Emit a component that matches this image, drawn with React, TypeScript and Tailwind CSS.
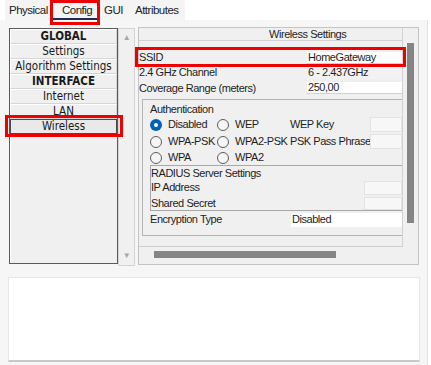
import React from "react";

const listItems: { label: string; bold?: boolean; selected?: boolean }[] = [
  { label: "GLOBAL", bold: true },
  { label: "Settings" },
  { label: "Algorithm Settings" },
  { label: "INTERFACE", bold: true },
  { label: "Internet" },
  { label: "LAN" },
  { label: "Wireless", selected: true },
];

function Radio({ checked = false }: { checked?: boolean }) {
  if (checked) {
    return (
      <span className="w-[12px] h-[12px] rounded-full bg-[#0061b9] flex items-center justify-center shrink-0">
        <span className="w-[4px] h-[4px] rounded-full bg-white" />
      </span>
    );
  }
  return <span className="w-[12px] h-[12px] rounded-full border border-[#5c5c5c] bg-[#f6f6f6] shrink-0" />;
}

function Option({ label, checked, w }: { label: string; checked?: boolean; w: string }) {
  return (
    <div className={`flex items-center gap-[6px] ${w} shrink-0 whitespace-nowrap`}>
      <Radio checked={checked} />
      <span>{label}</span>
    </div>
  );
}

function Field() {
  return <div className="w-[32px] h-[15px] bg-[#f7f7f7] border border-[#e3e3e3] shrink-0" />;
}

export default function App() {
  return (
    <div className="relative w-[431px] h-[365px] bg-white overflow-hidden font-['Liberation_Sans',Arial,sans-serif] text-[11px] tracking-[-0.45px] text-[#1e1e1e] leading-none">
      {/* tab strip */}
      <div className="flex h-[20px] text-[11.5px] tracking-[-0.5px] text-[#222] whitespace-nowrap">
        <div className="w-[5px]" />
        <div className="flex bg-[#f4f4f4] w-[180px]">
          <div className="w-[50px] pl-[4px] pt-[5px]">Physical</div>
          <div className="w-[45px] pl-[7px] pt-[5px] relative">
            Config
            <div className="absolute left-[-2px] right-[3px] bottom-0 h-[2px] bg-[#1e2d52]" />
          </div>
          <div className="w-[30px] pl-[4px] pt-[5px]">GUI</div>
          <div className="w-[55px] pl-[5px] pt-[5px]">Attributes</div>
        </div>
      </div>

      {/* body */}
      <div className="w-[428px] h-[345px] bg-[#f6f6f6] border-r border-[#e4e4e4] pt-[8px] pl-[9px]">
        <div className="flex h-[238px]">
          {/* left list */}
          <div className="w-[109px] h-[236px] border border-[#5a5a5a] bg-[#f0f0f0] flex flex-col font-['DejaVu_Sans_Condensed','DejaVu_Sans',sans-serif] text-[11.5px] tracking-normal text-[#1a1a1a]">
            {listItems.map((it) => (
              <div
                key={it.label}
                className={`h-[15px] shrink-0 flex items-center justify-center border ${
                  it.selected
                    ? "border-[#4a4a4a] bg-[#e9e9e9]"
                    : "border-t-white border-l-white border-b-[#d6d6d6] border-r-[#d6d6d6] bg-[#f0f0f0]"
                } ${it.bold ? "font-bold" : ""}`}
              >
                {it.label}
              </div>
            ))}
            <div className="flex-1 border-l border-t border-white" />
          </div>
          {/* left scrollbar */}
          <div className="w-[17px] h-[238px] border border-[#d4d4d4] bg-[#f0f0f0] flex flex-col items-center justify-between py-[5px] text-[#a6a6a6] text-[8px]">
            <span>▲</span>
            <span>▼</span>
          </div>

          {/* right panel */}
          <div className="ml-[3px] w-[281px] h-[238px] border border-[#c4c4c4] bg-[#f0f0f0] flex flex-col -mt-[1px]">
            <div className="flex h-[219px]">
              {/* viewport */}
              <div className="w-[263px] flex flex-col border-b border-[#cfcfcf]">
                <div className="h-[13px] border-b border-[#d2d2d2] pl-[130px] pt-[1px] whitespace-nowrap">Wireless Settings</div>
                <div className="mt-[9px] h-[15px] flex items-center">
                  <span className="w-[168px]">SSID</span>
                  <div className="w-[95px] h-[12px] bg-white border-b border-[#d0d0d0] pl-[1px] flex items-center">HomeGateway</div>
                </div>
                <div className="h-[15px] flex items-center">
                  <span className="w-[168px]">2.4 GHz Channel</span>
                  <div className="w-[95px] h-[12px] bg-[#f2f2f2] pl-[1px] flex items-center">6 - 2.437GHz</div>
                </div>
                <div className="h-[16px] flex items-center">
                  <span className="w-[168px] whitespace-nowrap">Coverage Range (meters)</span>
                  <div className="w-[95px] h-[12px] bg-white border-b border-[#d0d0d0] pl-[1px] flex items-center">250,00</div>
                </div>

                {/* authentication group */}
                <div className="mt-[3px] ml-[3px] w-[260px] h-[137px] border border-r-0 border-[#b4b4b4] pl-[7px] flex flex-col">
                  <div className="h-[16px] pt-[4px]">Authentication</div>
                  <div className="h-[17px] flex items-center">
                    <Option label="Disabled" checked w="w-[67px]" />
                    <Option label="WEP" w="w-[73px]" />
                    <span className="w-[80px] shrink-0">WEP Key</span>
                    <Field />
                  </div>
                  <div className="h-[17px] flex items-center">
                    <Option label="WPA-PSK" w="w-[67px]" />
                    <Option label="WPA2-PSK" w="w-[73px]" />
                    <span className="w-[80px] shrink-0 whitespace-nowrap">PSK Pass Phrase</span>
                    <Field />
                  </div>
                  <div className="h-[15px] flex items-center">
                    <Option label="WPA" w="w-[67px]" />
                    <Option label="WPA2" w="w-[73px]" />
                  </div>
                  <div className="h-[46px] border border-r-0 border-[#a8a8a8] flex flex-col">
                    <div className="h-[13px] pt-[2px] whitespace-nowrap">RADIUS Server Settings</div>
                    <div className="h-[17px] flex items-center justify-between">
                      <span>IP Address</span>
                      <div className="w-[38px] h-[14px] bg-[#f7f7f7] border border-[#e3e3e3]" />
                    </div>
                    <div className="h-[14px] flex items-center justify-between">
                      <span>Shared Secret</span>
                      <div className="w-[38px] h-[13px] bg-[#f7f7f7] border border-[#e3e3e3]" />
                    </div>
                  </div>
                  <div className="h-[17px] flex items-center">
                    <span className="w-[141px]">Encryption Type</span>
                    <div className="w-[111px] h-[14px] bg-white flex items-center pl-[1px]">Disabled</div>
                  </div>
                </div>
              </div>
              {/* vertical scrollbar */}
              <div className="w-[16px] border-l border-[#d2d2d2] pl-[4px] pt-[15px]">
                <div className="w-[7px] h-[180px] bg-[#858585]" />
              </div>
            </div>
            {/* horizontal scrollbar */}
            <div className="h-[17px] pl-[15px] pt-[4px]">
              <div className="w-[182px] h-[7px] bg-[#858585]" />
            </div>
          </div>
        </div>

        {/* bottom text area */}
        <div className="mt-[11px] -ml-[1px] w-[412px] h-[85px] bg-white border border-[#e8e8e8] border-b-2 border-b-[#c8c8c8]" />
      </div>

      {/* red annotation boxes */}
      <div className="absolute left-[50px] top-0 w-[50px] h-[25px] border-[3px] border-[#ee0000]" />
      <div className="absolute left-[5px] top-[115px] w-[118px] h-[22px] border-[3px] border-[#ee0000]" />
      <div className="absolute left-[135px] top-[47px] w-[271px] h-[20px] border-[3px] border-[#ee0000]" />
    </div>
  );
}
